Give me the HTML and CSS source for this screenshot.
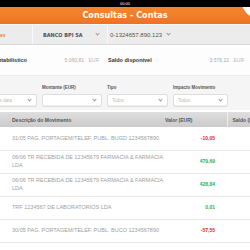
FILE: index.html
```html
<!DOCTYPE html>
<html lang="pt">
<head>
    <meta charset="UTF-8">
    <meta name="viewport" content="width=device-width, initial-scale=1.0">
    <title>Consultas - Contas</title>
    <link rel="stylesheet" href="styles.css">
</head>
<body>
    <div class="status-bar">00:00</div>
    <div class="title-bar">
        <h1>Consultas - Contas</h1>
        <span class="corner"></span>
    </div>

    <div class="viewport">
        <div class="sheet">
            <div class="account-bar">
                <div class="account-cell segment">Particulares</div>
                <div class="account-cell bank">BANCO BPI SA <span class="caret"></span></div>
                <div class="account-cell number">0-1324657.890.123 <span class="caret"></span></div>
            </div>

            <div class="balances">
                <div class="balance">
                    <span class="balance-label">Saldo contabilístico</span>
                    <span class="balance-value">5.060,81 <em>EUR</em></span>
                </div>
                <div class="balance">
                    <span class="balance-label">Saldo disponível</span>
                    <span class="balance-value">3.578,22 <em>EUR</em></span>
                </div>
            </div>

            <div class="filters">
                <div class="filter">
                    <label>Data</label>
                    <div class="select">Selecione data <span class="caret"></span></div>
                </div>
                <div class="filter">
                    <label>Montante (EUR)</label>
                    <div class="select"><span></span><span class="caret"></span></div>
                </div>
                <div class="filter">
                    <label>Tipo</label>
                    <div class="select">Todos <span class="caret"></span></div>
                </div>
                <div class="filter">
                    <label>Impacto Movimento</label>
                    <div class="select">Todos <span class="caret"></span></div>
                </div>
            </div>

            <table class="movements">
                <thead>
                    <tr>
                        <th class="mark"></th>
                        <th class="desc">Descrição do Movimento</th>
                        <th class="value">Valor (EUR)</th>
                        <th class="saldo">Saldo (EUR)</th>
                    </tr>
                </thead>
                <tbody>
                    <tr>
                        <td class="mark"></td>
                        <td class="desc">31/05 PAG. PORTAGEM/TELEF. PUBL. BUGD 1234567890</td>
                        <td class="value debit">-10,05</td>
                        <td class="saldo"></td>
                    </tr>
                    <tr>
                        <td class="mark"></td>
                        <td class="desc">06/06 TR RECEBIDA DE 12345679 FARMACIA &amp; FARMACIA LDA</td>
                        <td class="value credit">479,69</td>
                        <td class="saldo"></td>
                    </tr>
                    <tr>
                        <td class="mark"></td>
                        <td class="desc">06/06 TR RECEBIDA DE 12345679 FARMACIA &amp; FARMACIA LDA</td>
                        <td class="value credit">428,84</td>
                        <td class="saldo"></td>
                    </tr>
                    <tr>
                        <td class="mark"></td>
                        <td class="desc">TRF 1234567 DE LABORATORIOS LDA</td>
                        <td class="value credit">0,01</td>
                        <td class="saldo"></td>
                    </tr>
                    <tr>
                        <td class="mark"></td>
                        <td class="desc">30/05 PAG. PORTAGEM/TELEF. PUBL. BUCO 1234567890</td>
                        <td class="value debit">-57,55</td>
                        <td class="saldo"></td>
                    </tr>
                </tbody>
            </table>
        </div>
    </div>
</body>
</html>
```

FILE: styles.css
```css
* {
    box-sizing: border-box;
}
body {
    margin: 0;
    width: 250px;
    height: 250px;
    overflow: hidden;
    background: #fff;
    font-family: "Liberation Sans", Arial, sans-serif;
}
.status-bar {
    height: 7px;
    background: #000;
    color: #fff;
    font-size: 4px;
    line-height: 7px;
    text-align: center;
}
.title-bar {
    position: relative;
    height: 18px;
    background: linear-gradient(#f4862f, #ec7424);
    border-bottom: 1px solid #fafafa;
    overflow: hidden;
}
.title-bar h1 {
    margin: 0;
    font: bold 9px/17px "Liberation Sans Narrow", "DejaVu Sans Condensed", sans-serif;
    color: #fff;
    text-align: center;
}
.corner {
    position: absolute;
    top: -21px;
    right: -24px;
    width: 32px;
    height: 32px;
    border-radius: 50%;
    background: #fff;
}
.viewport {
    overflow: hidden;
}
.sheet {
    margin-left: -30px;
    width: 300px;
}
.caret {
    width: 3px;
    height: 3px;
    border-right: 1px solid #999;
    border-bottom: 1px solid #999;
    transform: rotate(45deg);
    margin-top: -2px;
}
.account-bar {
    display: flex;
    height: 20px;
    background: #ececec;
    border-bottom: 1px solid #d9d9d9;
    font-size: 5px;
    color: #555;
}
.account-cell {
    display: flex;
    align-items: center;
    border-right: 1px solid #f9f9f9;
}
.segment {
    width: 63px;
    padding-left: 7px;
    color: #f07b2b;
    font-weight: bold;
}
.bank {
    width: 75px;
    padding: 0 8px 0 10px;
    justify-content: space-between;
    font-weight: bold;
    font-family: "Liberation Sans Narrow", "DejaVu Sans Condensed", sans-serif;
    font-size: 5.5px;
}
.number {
    width: 72px;
    padding-left: 2px;
    gap: 5px;
    border-right: none;
    font-size: 6px;
}
.balances {
    display: flex;
    height: 31px;
    align-items: center;
    background: #fdfdfd;
    border-bottom: 1px solid #eaeaea;
    font-size: 5px;
}
.balance {
    display: flex;
    justify-content: space-between;
    padding: 0 4px 0 5px;
}
.balance:first-child {
    width: 133px;
}
.balance:last-child {
    width: 145px;
}
.balance-label {
    font-weight: bold;
    font-size: 5.5px;
    color: #333;
}
.balance-value {
    color: #aaa;
}
.balance-value em {
    font-style: normal;
    margin-left: 3px;
    color: #bbb;
}
.filters {
    display: grid;
    grid-template-columns: 60px 60px 61px 55px;
    column-gap: 5px;
    padding: 9px 0 3px 7px;
    background: #f5f5f5;
}
.filter label {
    display: block;
    margin-bottom: 4px;
    font-size: 4.5px;
    line-height: 5px;
    font-weight: bold;
    color: #555;
}
.select {
    display: flex;
    align-items: center;
    justify-content: space-between;
    height: 13px;
    padding: 0 5px 0 4px;
    background: #fff;
    border: 1px solid #dedede;
    border-radius: 2px;
    box-shadow: inset 0 -1px 0 #efefef;
    font-size: 4.5px;
    color: #bbb;
}
.movements {
    width: 300px;
    margin-top: 2px;
    table-layout: fixed;
    border-collapse: collapse;
    font-size: 5px;
}
.movements th {
    height: 15px;
    padding: 0;
    background: linear-gradient(#dedede, #cbcbcb);
    color: #555;
    font-weight: bold;
    text-align: left;
    white-space: nowrap;
}
.movements td {
    height: 23px;
    padding: 0;
    border-bottom: 1px solid #e8e8e8;
    color: #a0a0a0;
    line-height: 7.5px;
}
.movements .mark {
    width: 35px;
}
.movements .desc {
    width: 170px;
    padding-left: 7px;
}
.movements td.desc {
    padding-right: 5px;
    font-size: 5.5px;
}
.movements .value {
    width: 52px;
}
.movements th.value {
    text-indent: -10px;
}
.movements td.value {
    padding-right: 12px;
    text-align: right;
    font-weight: bold;
}
.movements .saldo {
    padding-left: 5px;
}
.movements th.saldo {
    border-left: 1px solid #eee;
}
.movements .debit {
    color: #e8242f;
}
.movements .credit {
    color: #37a94b;
}
```
